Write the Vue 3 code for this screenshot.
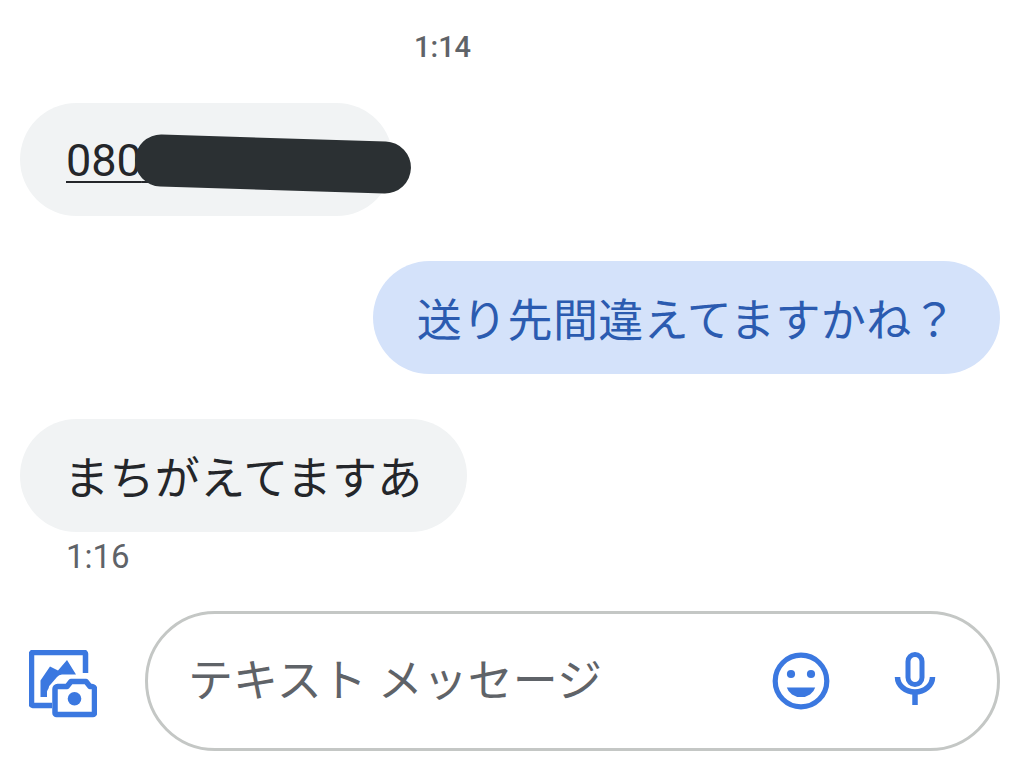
<script setup>
const messages = [
  { id: 2, text: '送り先間違えてますかね？', out: true },
  { id: 3, text: 'まちがえてますあ', out: false }
]
</script>

<template>
  <div class="screen">
    <div class="stamp">1:14</div>
    <div class="thread">
      <div class="bubble in number">
        <span class="link">080<span class="hidden-digits">12345678</span></span>
        <div class="redaction"></div>
      </div>
      <div
        v-for="m in messages"
        :key="m.id"
        class="bubble"
        :class="m.out ? 'out' : 'in'"
      >{{ m.text }}</div>
    </div>
    <div class="time">1:16</div>
    <div class="composer">
      <button class="attach" aria-label="attach">
        <svg width="68" height="68" viewBox="0 0 68 68">
          <path d="M56.500 23V3.700a1.200 1.200 0 0 0-1.200-1.200H3.700a1.200 1.200 0 0 0-1.200 1.200v50.600a1.200 1.200 0 0 0 1.200 1.200H23" fill="none" stroke="#3b78e0" stroke-width="5.500" />
          <path d="M11.500 47V30.500L21 16.500l8 4 9-10.500 9 14.500H33a7 7 0 0 0-5 2.500l-6 7a6 6 0 0 0-2.500 4.500a8 8 0 0 0-1.500 3V47Z" fill="#3b78e0" />
          <path d="M32.500 36.500h5.500l4-5h15l4 5h2a2.500 2.500 0 0 1 2.500 2.500v24a1.500 1.500 0 0 1-1.500 1.500H27.500a1.500 1.500 0 0 1-1.500-1.500V39a2.500 2.500 0 0 1 2.500-2.500Z" fill="none" stroke="#3b78e0" stroke-width="5.500" stroke-linejoin="round" />
          <circle cx="45.500" cy="48.700" r="6.800" fill="#3b78e0" />
        </svg>
      </button>
      <div class="field">
        <span class="placeholder">テキスト メッセージ</span>
        <svg class="emoji" width="60" height="60" viewBox="0 0 60 60">
          <circle cx="30" cy="30" r="25.800" fill="none" stroke="#3b78e0" stroke-width="5.200" />
          <circle cx="20" cy="23" r="4.100" fill="#3b78e0" />
          <circle cx="40" cy="23" r="4.100" fill="#3b78e0" />
          <path d="M15.800 36.500h28.400a14.600 12.500 0 0 1-28.400 0Z" fill="#3b78e0" />
        </svg>
        <svg class="mic" width="44" height="55" viewBox="0 0 44 55">
          <rect x="14" y="2.500" width="14" height="30" rx="7" fill="none" stroke="#3b78e0" stroke-width="5" />
          <path d="M3.500 25a17.500 15 0 0 0 35 0" fill="none" stroke="#3b78e0" stroke-width="5.500" />
          <path d="M21 38v15" stroke="#3b78e0" stroke-width="5.500" />
        </svg>
      </div>
    </div>
  </div>
</template>

<style>
html, body { margin: 0; background: #fff; }
</style>

<style scoped>
.screen {
  width: 1023px;
  height: 780px;
  overflow: hidden;
  background: #fff;
  font-family: Roboto, "Noto Sans CJK JP", sans-serif;
  color: #24262a;
}
.stamp {
  height: 38px;
  padding: 28px 0 0 414px;
  font-size: 29px;
  line-height: 38px;
  font-weight: 500;
  color: #5f6368;
}
.thread {
  margin-top: 37px;
  padding: 0 23px 0 20px;
  display: flex;
  flex-direction: column;
  gap: 45px;
}
.bubble {
  height: 113px;
  box-sizing: border-box;
  border-radius: 56.500px;
  padding: 0 44px;
  display: flex;
  align-items: center;
  font-size: 45px;
  letter-spacing: 0.4px;
  white-space: nowrap;
  width: fit-content;
}
.in { background: #f1f3f4; }
.out {
  align-self: flex-end;
  padding-right: 43px;
  background: #d4e2fa;
  color: #2b5bb0;
}
.number {
  position: relative;
  width: 373px;
  padding-left: 46px;
  letter-spacing: 0;
}
.link {
  position: relative;
  top: 1px;
  text-decoration: underline;
  text-decoration-thickness: 2px;
  text-underline-offset: 5px;
}
.hidden-digits { color: transparent; }
.redaction {
  position: absolute;
  left: 115px;
  top: 35px;
  width: 276px;
  height: 52px;
  border-radius: 26px;
  background: #2b3033;
  transform: rotate(1.800deg);
}
.time {
  margin: 6px 0 0 66px;
  height: 38px;
  font-size: 33px;
  line-height: 38px;
  color: #5f6368;
}
.composer {
  margin-top: 35px;
  padding: 0 23px 0 29px;
  display: flex;
  align-items: center;
}
.attach {
  width: 116px;
  height: 68px;
  margin-top: 6px;
  padding: 0;
  border: 0;
  background: none;
  display: flex;
  flex: none;
}
.field {
  width: 855px;
  height: 140px;
  flex: none;
  box-sizing: border-box;
  border: 3px solid #c4c7c5;
  border-radius: 70px;
  padding: 0 0 0 40px;
  display: flex;
  align-items: center;
}
.placeholder {
  font-size: 45px;
  line-height: 54px;
  margin-top: 2px;
  color: #5f6368;
  flex: 1;
  white-space: nowrap;
}
.emoji { flex: none; }
.mic { flex: none; margin: 0 59px 4px 63px; }
</style>
